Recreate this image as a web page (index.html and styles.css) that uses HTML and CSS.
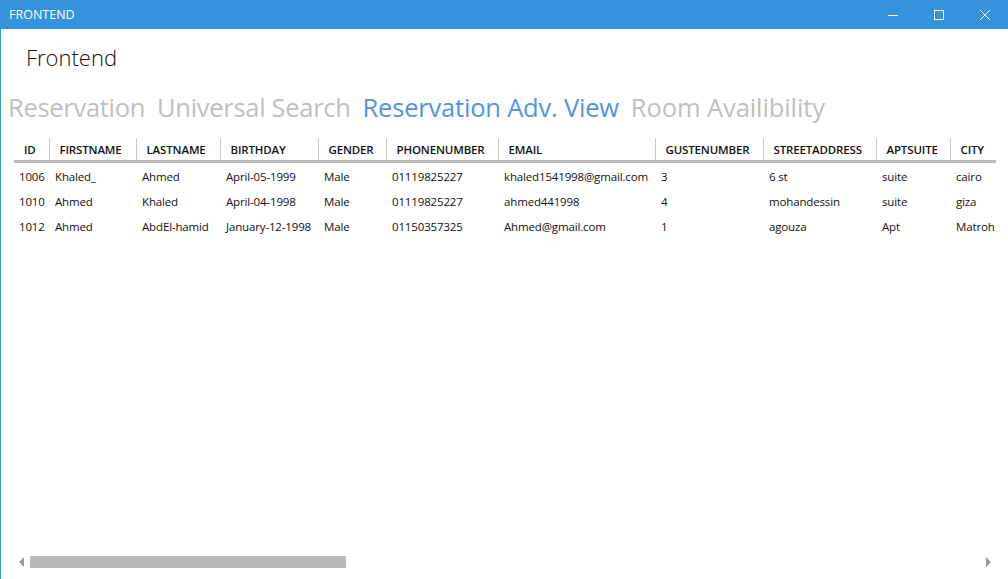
FILE: index.html
```html
<!DOCTYPE html>
<html>
<head>
<meta charset="utf-8">
<link rel="stylesheet" href="styles.css">
</head>
<body>
<div class="window">
  <div class="titlebar">
    <span class="title">FRONTEND</span>
    <div class="controls">
      <span class="ctl"><svg width="12" height="12" viewBox="0 0 12 12"><path d="M1 6.5h10" stroke="#fff" stroke-width="1"/></svg></span>
      <span class="ctl"><svg width="12" height="12" viewBox="0 0 12 12"><rect x="1.5" y="1.5" width="9" height="9" fill="none" stroke="#fff" stroke-width="1"/></svg></span>
      <span class="ctl"><svg width="12" height="12" viewBox="0 0 12 12"><path d="M1 1l10 10M11 1L1 11" stroke="#fff" stroke-width="1"/></svg></span>
    </div>
  </div>
  <div class="content">
    <div class="apptitle">Frontend</div>
    <div class="tabs">
      <span class="tab">Reservation</span>
      <span class="tab">Universal Search</span>
      <span class="tab active">Reservation Adv. View</span>
      <span class="tab">Room Availibility</span>
    </div>
    <div class="grid">
      <table class="data">
        <colgroup>
          <col class="c-id"><col class="c-first"><col class="c-last"><col class="c-birth"><col class="c-gender"><col class="c-phone"><col class="c-email"><col class="c-guest"><col class="c-street"><col class="c-apt"><col class="c-city">
        </colgroup>
        <thead>
          <tr>
            <th class="first">ID</th><th>FIRSTNAME</th><th>LASTNAME</th><th>BIRTHDAY</th><th>GENDER</th><th>PHONENUMBER</th><th>EMAIL</th><th>GUSTENUMBER</th><th>STREETADDRESS</th><th>APTSUITE</th><th>CITY</th>
          </tr>
        </thead>
        <tbody>
          <tr><td>1006</td><td>Khaled_</td><td>Ahmed</td><td>April-05-1999</td><td>Male</td><td>01119825227</td><td>khaled1541998@gmail.com</td><td>3</td><td>6 st</td><td>suite</td><td>cairo</td></tr>
          <tr><td>1010</td><td>Ahmed</td><td>Khaled</td><td>April-04-1998</td><td>Male</td><td>01119825227</td><td>ahmed441998</td><td>4</td><td>mohandessin</td><td>suite</td><td>giza</td></tr>
          <tr><td>1012</td><td>Ahmed</td><td>AbdEl-hamid</td><td>January-12-1998</td><td>Male</td><td>01150357325</td><td>Ahmed@gmail.com</td><td>1</td><td>agouza</td><td>Apt</td><td>Matroh</td></tr>
        </tbody>
      </table>
    </div>
    <div class="hscroll">
      <span class="arrow left"></span>
      <div class="track"><div class="thumb"></div></div>
      <span class="arrow right"></span>
    </div>
  </div>
</div>
</body>
</html>
```
FILE: styles.css
```css
html, body {
  margin: 0;
  padding: 0;
  background: #fff;
}
body {
  font-family: "Open Sans", "Noto Sans", sans-serif;
  width: 1008px;
  height: 579px;
  overflow: hidden;
}
.window {
  width: 1008px;
  height: 579px;
  box-sizing: border-box;
  border-left: 1px solid #3592dc;
  display: flex;
  flex-direction: column;
}
.titlebar {
  height: 29px;
  margin-left: -1px;
  background: #3592dc;
  color: #fff;
  display: flex;
  align-items: center;
  justify-content: space-between;
}
.title {
  padding-left: 9px;
  font-size: 12.5px;
}
.controls {
  display: flex;
  height: 29px;
}
.ctl {
  width: 46px;
  display: flex;
  align-items: center;
  justify-content: center;
}
.content {
  flex: 1;
  display: flex;
  flex-direction: column;
}
.apptitle {
  font-size: 22px;
  color: #111;
  padding-left: 25px;
  margin-top: 13px;
  height: 30px;
  line-height: 30px;
  font-weight: 300;
}
.tabs {
  display: flex;
  gap: 12px;
  padding-left: 7px;
  margin-top: 17px;
  height: 36px;
  line-height: 36px;
}
.tab {
  font-size: 25.5px;
  color: #bfbfbf;
  font-weight: 400;
  letter-spacing: -0.3px;
}
.tab.active {
  color: #4f95e0;
  letter-spacing: -0.2px;
}
.tab:last-child {
  letter-spacing: -0.1px;
}
.grid {
  flex: 1;
  padding-left: 13px;
  padding-top: 13px;
}
.data {
  border-collapse: collapse;
  table-layout: fixed;
  width: 982px;
  font-size: 11.5px;
  letter-spacing: -0.15px;
  color: #111;
}
.c-id { width: 35px; }
.c-first { width: 87px; }
.c-last { width: 84px; }
.c-birth { width: 98px; }
.c-gender { width: 68px; }
.c-phone { width: 112px; }
.c-email { width: 157px; }
.c-guest { width: 108px; }
.c-street { width: 113px; }
.c-apt { width: 74px; }
.c-city { width: 46px; }
th {
  height: 22px;
  padding: 0 0 0 10px;
  text-align: left;
  font-weight: 600;
  border-left: 1px solid #c8c8c8;
  border-bottom: 3px solid #bdbdbd;
  white-space: nowrap;
  overflow: hidden;
}
th.first {
  border-left: none;
}
td {
  height: 25px;
  padding: 0 0 0 6px;
  white-space: nowrap;
  overflow: hidden;
  vertical-align: middle;
}
td:first-child {
  padding-left: 5px;
}
tbody tr:first-child td {
  padding-top: 1px;
}
.hscroll {
  height: 12px;
  margin-bottom: 11px;
  display: flex;
  align-items: center;
  padding-left: 18px;
  padding-right: 17px;
}
.arrow {
  width: 0;
  height: 0;
  border-top: 5px solid transparent;
  border-bottom: 5px solid transparent;
}
.arrow.left {
  border-right: 5px solid #9a9a9a;
}
.arrow.right {
  border-left: 5px solid #9a9a9a;
}
.track {
  flex: 1;
  height: 12px;
  margin: 0 6px;
}
.thumb {
  width: 316px;
  height: 12px;
  background: #b9b9b9;
}
```
